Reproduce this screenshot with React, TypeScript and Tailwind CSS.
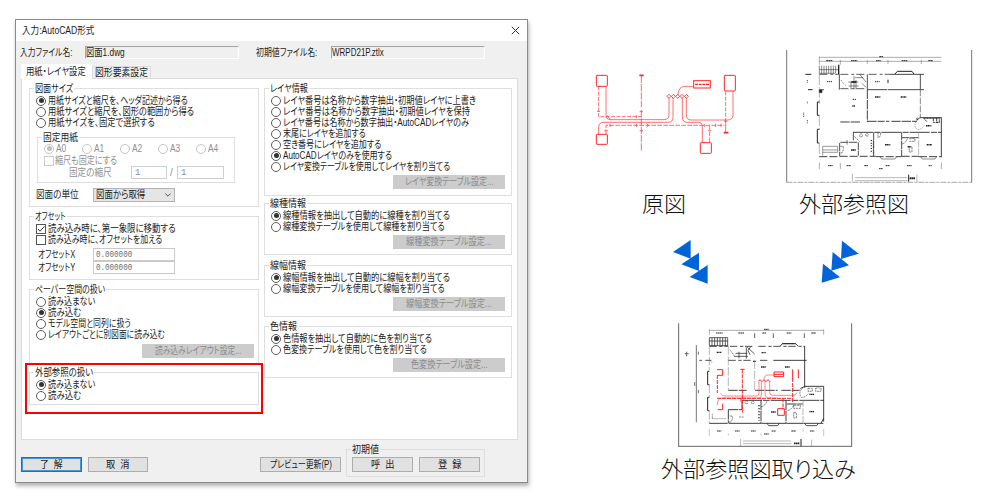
import { useLayoutEffect, useRef, type ReactNode } from 'react'
import { clsx } from 'clsx'

const LAYER_OPTIONS = [
  { label: 'レイヤ番号は名称から数字抽出・初期値レイヤに上書き', width: 'w-[193px]' },
  { label: 'レイヤ番号は名称から数字抽出・初期値レイヤを保持', width: 'w-[187px]' },
  { label: 'レイヤ番号は名称から数字抽出・AutoCADレイヤのみ', width: 'w-[186px]' },
  { label: '末尾にレイヤを追加する', width: 'w-[83px]' },
  { label: '空き番号にレイヤを追加する', width: 'w-[98px]' },
  { label: 'AutoCADレイヤのみを使用する', width: 'w-[109px]', checked: true },
  { label: 'レイヤ変換テーブルを使用してレイヤを割り当てる', width: 'w-[167px]' },
]

const MAPPING_GROUPS = [
  {
    title: '線種情報',
    titleWidth: 'w-[36px]',
    margin: 'mt-[7px]',
    button: '線種変換テーブル設定...',
    buttonWidth: 'w-[86px]',
    options: [
      { label: '線種情報を抽出して自動的に線種を割り当てる', width: 'w-[167px]', checked: true },
      { label: '線種変換テーブルを使用して線種を割り当てる', width: 'w-[162px]' },
    ],
  },
  {
    title: '線幅情報',
    titleWidth: 'w-[36px]',
    margin: 'mt-[10px]',
    button: '線幅変換テーブル設定...',
    buttonWidth: 'w-[86px]',
    options: [
      { label: '線幅情報を抽出して自動的に線幅を割り当てる', width: 'w-[167px]', checked: true },
      { label: '線幅変換テーブルを使用して線幅を割り当てる', width: 'w-[162px]' },
    ],
  },
  {
    title: '色情報',
    titleWidth: 'w-[27px]',
    margin: 'mt-[9px]',
    button: '色変換テーブル設定...',
    buttonWidth: 'w-[77px]',
    options: [
      { label: '色情報を抽出して自動的に色を割り当てる', width: 'w-[149px]', checked: true },
      { label: '色変換テーブルを使用して色を割り当てる', width: 'w-[144px]' },
    ],
  },
]

const PAPER_SIZES = [
  { label: 'A0', checked: true },
  { label: 'A1' },
  { label: 'A2' },
  { label: 'A3' },
  { label: 'A4' },
]

/** Condenses a line of text to the width of its box. */
function Fit({ className, children }: { className: string; children: string }) {
  const ref = useRef<HTMLSpanElement>(null)

  useLayoutEffect(() => {
    const el = ref.current
    if (!el || !el.parentElement) return
    el.style.transform = `scaleX(${el.parentElement.clientWidth / el.offsetWidth})`
  }, [children])

  return (
    <span className={clsx('block shrink-0', className)}>
      <span ref={ref} className="block w-max origin-left whitespace-pre [font-feature-settings:'palt']">
        {children}
      </span>
    </span>
  )
}

function Dot({ checked, disabled }: { checked?: boolean; disabled?: boolean }) {
  return (
    <span
      className={clsx(
        'flex size-[10px] shrink-0 items-center justify-center rounded-full border bg-white',
        disabled ? 'border-[#c4c4c4]' : 'border-[#5c5c5c]',
      )}
    >
      {checked ? <span className={clsx('size-[5px] rounded-full', disabled ? 'bg-[#c0c0c0]' : 'bg-[#333]')} /> : null}
    </span>
  )
}

function Box({ checked, disabled }: { checked?: boolean; disabled?: boolean }) {
  return (
    <span className={clsx('size-[10px] shrink-0 border bg-white', disabled ? 'border-[#ccc]' : 'border-[#555]')}>
      {checked ? (
        <svg viewBox="0 0 8 8" className="block size-2 fill-none stroke-[#333]">
          <path d="M1 4l2 2.2L7.4 1.4" />
        </svg>
      ) : null}
    </span>
  )
}

function Radio({ label, width, checked }: { label: string; width: string; checked?: boolean }) {
  return (
    <div className="flex h-[11px] items-center gap-[2px] pl-[6px]">
      <Dot checked={checked} />
      <Fit className={width}>{label}</Fit>
    </div>
  )
}

function Group({
  title,
  titleWidth,
  className,
  children,
}: {
  title: string
  titleWidth: string
  className?: string
  children: ReactNode
}) {
  return (
    <section className={clsx('border border-[#dedede]', className)}>
      <div className="-mt-[6px] mb-px ml-[4px] flex h-[11px] w-max items-center bg-inherit px-px">
        <Fit className={titleWidth}>{title}</Fit>
      </div>
      {children}
    </section>
  )
}

function DisabledButton({ label, width, className }: { label: string; width: string; className?: string }) {
  return (
    <div
      className={clsx(
        'flex h-[14px] w-[112px] items-center justify-center bg-[#cccccc] text-[#8b8b8b]',
        className,
      )}
    >
      <Fit className={width}>{label}</Fit>
    </div>
  )
}

function Button({ label, width, className }: { label: string; width: string; className?: string }) {
  return (
    <div className={clsx('flex h-[15px] items-center justify-center bg-[#e1e1e1]', className)}>
      <Fit className={width}>{label}</Fit>
    </div>
  )
}

function ImportDialog() {
  return (
    <div className="mt-[19px] ml-[15px] flex h-[464px] w-[513px] shrink-0 flex-col border border-[#8a8a8a] bg-[#f0f0f0] font-['Liberation_Sans','Noto_Sans_CJK_JP',sans-serif] text-[10px] leading-[10px] text-[#1c1c1c] shadow-[1px_3px_4px_rgba(0,0,0,0.3)]">
      <header className="flex h-[21px] items-center justify-between bg-white pr-[7px] pl-[6px]">
        <Fit className="w-[72px]">入力:AutoCAD形式</Fit>
        <svg viewBox="0 0 9 9" className="size-[9px] fill-none stroke-[#333]">
          <path d="M.8.8l7.4 7.4M8.2.8L.8 8.2" />
        </svg>
      </header>

      <div className="flex h-[23px] items-center pl-[4px]">
        <Fit className="w-[52px]">入力ファイル名:</Fit>
        <div className="ml-[13px] flex h-[13px] w-[154px] items-center border border-t-[#a5a5a5] border-r-white border-b-white border-l-[#a5a5a5]">
          <Fit className="w-[39px]">図面1.dwg</Fit>
        </div>
        <Fit className="ml-[17px] w-[61px]">初期値ファイル名:</Fit>
        <div className="ml-[14px] flex h-[13px] w-[154px] items-center border border-t-[#a5a5a5] border-r-white border-b-white border-l-[#a5a5a5]">
          <Fit className="w-[52px]">WRPD21P.ztlx</Fit>
        </div>
      </div>

      <div className="flex h-[14px] items-end pl-[5px]">
        <div className="z-10 -mb-px flex h-[15px] w-[71px] items-center bg-white pl-[5px]">
          <Fit className="w-[60px]">用紙・レイヤ設定</Fit>
        </div>
        <div className="flex h-[12px] w-[59px] items-center border border-b-0 border-[#dcdcdc] pl-[2px]">
          <Fit className="w-[53px]">図形要素設定</Fit>
        </div>
      </div>

      <main className="mr-[9px] ml-[5px] flex h-[362px] border border-[#dcdcdc] bg-white">
        <div className="ml-[7px] w-[230px]">
          <Group title="図面サイズ" titleWidth="w-[38px]" className="mt-[9px] h-[119px] bg-white">
            <Radio label="用紙サイズと縮尺を、ヘッダ記述から得る" width="w-[140px]" checked />
            <Radio label="用紙サイズと縮尺を、図形の範囲から得る" width="w-[146px]" />
            <Radio label="用紙サイズを、固定で選択する" width="w-[107px]" />
            <Group title="固定用紙" titleWidth="w-[35px]" className="mt-[9px] ml-[7px] h-[46px] w-[198px] bg-white">
              <div className="-mt-px flex h-[11px] items-center pl-[6px] text-[#8f8f8f]">
                {PAPER_SIZES.map((size) => (
                  <div key={size.label} className="flex w-[38.5px] items-center gap-[2px]">
                    <Dot checked={size.checked} disabled />
                    <Fit className="w-[10px]">{size.label}</Fit>
                  </div>
                ))}
              </div>
              <div className="mt-px flex h-[11px] items-center gap-[1px] pl-[6px] text-[#8f8f8f]">
                <Box disabled />
                <Fit className="w-[62px]">縮尺も固定にする</Fit>
              </div>
              <div className="flex h-[13px] items-center pl-[31px] text-[#8f8f8f]">
                <Fit className="w-[43px]">固定の縮尺</Fit>
                <div className="ml-[19px] flex h-[13px] w-[36px] items-center border border-[#cfcfcf] pl-[3px] font-['Liberation_Mono'] text-[9px]">
                  1
                </div>
                <span className="ml-[3px] w-[7px]">/</span>
                <div className="flex h-[13px] w-[47px] items-center border border-[#cfcfcf] pl-[3px] font-['Liberation_Mono'] text-[9px]">
                  1
                </div>
              </div>
            </Group>
            <div className="mt-[5px] flex items-center pl-[6px]">
              <Fit className="w-[43px]">図面の単位</Fit>
              <div className="ml-[14px] flex h-[14px] w-[82px] items-center justify-between border border-[#b4b4b4] bg-[#e5e5e5] pr-[3px] pl-[2px]">
                <Fit className="w-[49px]">図面から取得</Fit>
                <svg viewBox="0 0 6 4" className="h-1 w-1.5 fill-none stroke-[#555]">
                  <path d="M.3.5L3 3.2 5.7.5" />
                </svg>
              </div>
            </div>
          </Group>

          <Group title="オフセット" titleWidth="w-[31px]" className="mt-[9px] h-[64px] bg-white">
            <div className="flex h-[11px] items-center gap-[2px] pl-[6px]">
              <Box checked />
              <Fit className="w-[128px]">読み込み時に、第一象限に移動する</Fit>
            </div>
            <div className="flex h-[11px] items-center gap-[2px] pl-[6px]">
              <Box />
              <Fit className="w-[114px]">読み込み時に、オフセットを加える</Fit>
            </div>
            <div className="pt-[3px]">
              {['X', 'Y'].map((axis) => (
                <div key={axis} className="flex h-[13px] items-center pl-[8px]">
                  <Fit className="w-[37px]">{`オフセット${axis}`}</Fit>
                  <div className="ml-[18px] flex h-[13px] w-[82px] items-center border border-[#cacaca] pl-[2px] font-['Liberation_Mono'] text-[9px] text-[#6d6d6d]">
                    <Fit className="w-[36px]">0.000000</Fit>
                  </div>
                </div>
              ))}
            </div>
          </Group>

          <Group title="ペーパー空間の扱い" titleWidth="w-[70px]" className="mt-[9px] h-[75px] bg-white">
            <Radio label="読み込まない" width="w-[47px]" />
            <Radio label="読み込む" width="w-[33px]" checked />
            <Radio label="モデル空間と同列に扱う" width="w-[83px]" />
            <Radio label="レイアウトごとに別図面に読み込む" width="w-[117px]" />
            <DisabledButton label="読み込みレイアウト設定..." width="w-[87px]" className="mt-[4px] ml-[112px]" />
          </Group>

          <div className="-mt-px -ml-[4px] h-[51px] w-[238px] border-2 border-[#ff0000] pl-[2px]">
            <Group title="外部参照の扱い" titleWidth="w-[58px]" className="mt-[7px] h-[33px] w-[230px] bg-white">
              <Radio label="読み込まない" width="w-[47px]" checked />
              <Radio label="読み込む" width="w-[33px]" />
            </Group>
          </div>
        </div>

        <div className="ml-[5px] w-[248px]">
          <Group title="レイヤ情報" titleWidth="w-[38px]" className="mt-[9px] h-[108px] bg-white">
            {LAYER_OPTIONS.map((option) => (
              <Radio key={option.label} {...option} />
            ))}
            <DisabledButton label="レイヤ変換テーブル設定..." width="w-[89px]" className="mt-[3px] ml-[128px]" />
          </Group>
          {MAPPING_GROUPS.map((group) => (
            <Group
              key={group.title}
              title={group.title}
              titleWidth={group.titleWidth}
              className={clsx('h-[52px] bg-white', group.margin)}
            >
              {group.options.map((option) => (
                <Radio key={option.label} {...option} />
              ))}
              <DisabledButton label={group.button} width={group.buttonWidth} className="mt-[3px] ml-[128px]" />
            </Group>
          ))}
        </div>
      </main>

      <footer className="mt-[9px] flex pl-[5px]">
        <Button
          label="了  解"
          width="w-[23px]"
          className="mt-[8px] w-[61px] border border-[#0078d7] ring-1 ring-[#0078d7]/70 ring-inset"
        />
        <Button label="取  消" width="w-[24px]" className="mt-[8px] ml-[6px] w-[60px] border border-[#adadad]" />
        <Button label="プレビュー更新(P)" width="w-[62px]" className="mt-[8px] ml-[112px] w-[81px] border border-[#adadad]" />
        <Group title="初期値" titleWidth="w-[27px]" className="ml-[5px] h-[28px] w-[139px] bg-[#f0f0f0]">
          <div className="mt-[2px] flex gap-[6px] pl-[5px]">
            <Button label="呼  出" width="w-[24px]" className="w-[61px] border border-[#adadad]" />
            <Button label="登  録" width="w-[24px]" className="w-[61px] border border-[#adadad]" />
          </div>
        </Group>
      </footer>
    </div>
  )
}

function WiringDrawing() {
  return (
    <svg viewBox="0 0 510 300" className="block h-[100px] w-[170px] fill-none stroke-[#ff2626] stroke-2">
      <rect x="49" y="46" width="33" height="33" rx="2" strokeWidth="3" />
      <rect x="49" y="223" width="33" height="30" rx="2" strokeWidth="3" />
      <rect x="433" y="46" width="33" height="47" rx="2" strokeWidth="3" />
      <rect x="361" y="248" width="33" height="32" rx="2" strokeWidth="3" />
      <rect x="341" y="62" width="50" height="22" strokeWidth="3" />
      <path d="M345 73h42" strokeWidth="4" strokeDasharray="9 2" />
      <path d="M78 79v87q0 13 14 13h160q15 0 15-15v-50M82 166q2 9 10 11" />
      <path d="M56 222v-20q0-15 15-15h192q16 0 16-15v-58" />
      <path d="M307 114v57q0 16 14 16h34q12 0 12 14v46M319 114v50q0 16 14 16h108q18 0 18-14V94M294 106q0-27 22-27h25" />
      <path d="M56 79v91h128M437 94v90" strokeDasharray="12 4" />
      <path d="M78 222v-26h356M389 246v-50" strokeDasharray="14 4" />
      <path d="M184 47v95M184 150v122" strokeDasharray="22 3" />
      <path d="M178 46h13M431 218h14" strokeWidth="5" />
      <path d="M437 184v34M179 155h10M179 212h10M51 154h9M432 184h11M73 212h10M384 212h10M169 165v10M200 190l5 6-5 6M90 192v9M169 192v9M373 192v9M407 191v10M423 191v10" />
      <path d="M261 109l6-6 6 6-6 6zM274 109l6-6 6 6-6 6zM287 109l6-6 6 6-6 6zM300 109l6-6 6 6-6 6zM313 109l6-6 6 6-6 6z" strokeWidth="2.5" />
    </svg>
  )
}

function FloorPlan() {
  return (
    <svg viewBox="0 0 600 440" className="block h-[146.67px] w-[200px] fill-none stroke-[#222] stroke-[1.6]">
      <path d="M20 30v397M575 30v397" stroke="#777" strokeWidth="3" />
      <path d="M19 427h557" stroke="#aaa" strokeWidth="3" strokeDasharray="18 3 9 3" />
      <path d="M118 52h366M118 64h366M118 50v24M181 60v14M262 60v12M324 60v12M424 60v12" stroke="#666" />
      <path d="M139 62h19M213 62h19M288 62h14M365 62h18M445 62h14M298 50h11" strokeWidth="3" strokeDasharray="5 1" />
      <path d="M118 89h58M118 77v23M125 77v23M132 77v23M139 77v23M146 77v23M153 77v23M160 77v23M167 77v23M118 100h48" />
      <path d="M176 74v28" strokeWidth="4" />
      <path d="M76 103h18M84 149h14" strokeWidth="3" />
      <path d="M118 103h60M118 149h14M181 103h80M266 103h60M181 146h80" strokeDasharray="24 9 9 6" strokeWidth="2.2" />
      <path d="M326 103h106M262 149h60M324 149h108" strokeWidth="2.5" />
      <path d="M178 103v46M262 103v46M421 103v46" strokeWidth="2.4" />
      <path d="M345 102l7-8h44l6 8" strokeWidth="3" />
      <path d="M118 103v88M118 226v42M118 310v42" stroke="#777" strokeDasharray="32 6" />
      <path d="M118 186h-6v40h6M118 268h-6v41h6" strokeWidth="3" />
      <path d="M118 150h8v8h-8z" fill="#222" />
      <path d="M262 149v97M262 244h52M318 244h10M334 244h77M181 246h60" strokeWidth="2.6" strokeDasharray="28 3" />
      <path d="M421 149v84" stroke="#777" strokeWidth="2.6" strokeDasharray="20 4" />
      <path d="M222 108v40M228 120v28M213 148v-22M205 126h30M206 138h30M225 113h24M240 104l18 22M246 130l12 12" />
      <path d="M214 126h15" strokeWidth="5" />
      <path d="M183 120l5 8 6 5 6 5" strokeDasharray="3 3" />
      <path d="M324 119v10" strokeWidth="3" />
      <path d="M285 171h16M362 171h17M438 257h16M315 314h16M440 314h16M213 330h15M383 320h10M217 198h8" strokeWidth="4.5" strokeDasharray="4 1" />
      <path d="M141 125h15M285 125h14M218 178h12" strokeWidth="3" strokeDasharray="4 2" />
      <path d="M484 232v120M411 240l9-7h64M411 240v-7" strokeWidth="2.6" />
      <path d="M430 235h48v12h-18v-10M434 238l8 8M470 236v12h8" strokeWidth="2.6" strokeDasharray="7 2" />
      <path d="M412 240q-14 17 0 29q15-2 21-12" strokeDasharray="3 4" />
      <path d="M219 277h265" strokeWidth="2.6" strokeDasharray="60 4 18 3" />
      <path d="M220 277v26M281 277v72M365 277v72M181 307h53M235 307v40M179 309v40M365 293h50" strokeWidth="2.4" strokeDasharray="24 2" />
      <path d="M416 277v72" stroke="#777" strokeDasharray="20 4" />
      <path d="M118 350h54M179 349h108M287 350h78M365 349h52M417 350h67" strokeWidth="2.6" strokeDasharray="24 6" />
      <path d="M300 350l5 7h40l5-7M422 350l5 7h38l5-7" />
      <path d="M128 319h45v18h-45M128 330h45M128 347v-28" stroke="#444" />
      <path d="M181 319h9v10l-4 10h-7M216 330h10M223 289l16 16M240 290q-3-9 4-9q6 4 2 9zM258 288q-3-7 3-8q7 4 2 8zM280 300v40M294 277v16q8-1 8-15M365 312q13-2 18-18M388 296h17v8h-17M388 320h8v16h-8zM201 300v14" strokeDasharray="7 2" />
      <path d="M274 300v36" strokeWidth="4" strokeDasharray="3 5" />
      <path d="M118 368v19M181 368v19M484 368v19" stroke="#666" />
      <path d="M144 377h14M200 377h13M253 377h12M317 377h13M381 377h14M446 377h9M297 386h12" strokeWidth="3" strokeDasharray="5 1" />
      <path d="M82 120v8M82 185v6M71 218v14M82 240v11" strokeWidth="2.4" strokeDasharray="3 2" />
      <path d="M217 402v23M225 413h157M225 422h157M411 404v22" stroke="#777" />
      <path d="M386 404v21" strokeWidth="3" />
      <path d="M389 415h16" strokeWidth="6" strokeDasharray="5 1" />
    </svg>
  )
}

function MergedPlan() {
  return (
    <svg viewBox="0 0 660 420" className="block h-[140px] w-[220px] fill-none stroke-[#222] stroke-[1.6]">
      <path d="M86 40v369M605 40v369M85 409h521" stroke="#666" strokeWidth="3" />
      <path d="M178 61h343M178 58v16M521 58v16" stroke="#666" />
      <path d="M314 70v14M370 70v14M463 70v14" stroke="#666" strokeWidth="3" />
      <path d="M198 69h20M265 69h18M337 69h12M410 69h14M484 69h14M342 58h14" strokeWidth="3" strokeDasharray="5 1" />
      <path d="M178 83h55v24h-55zM178 93h55M186 83v24M194 83v24M202 83v24M210 83v24M218 83v24M226 83v24" strokeWidth="2.2" />
      <path d="M139 105v232" stroke="#777" strokeWidth="3" />
      <path d="M104 131h12M110 125v14M145 125v9M134 216v12M145 240v10" stroke="#555" strokeWidth="2.6" />
      <path d="M178 109h57M240 109h75M325 109h139M148 151h8M166 151h18M235 151h70M330 151h23" strokeWidth="2.4" strokeDasharray="22 8 10 5" />
      <path d="M370 151h100" strokeWidth="2.6" />
      <path d="M464 108v125" strokeWidth="2.6" />
      <path d="M391 108l6-7h40l7 7M397 101h40" strokeWidth="2.6" />
      <path d="M178 109v72M178 224v38M178 303v38M235 109v131M314 151v90" stroke="#777" strokeDasharray="26 5" />
      <path d="M178 184h-5v40h5M178 262h-5v40h5" strokeWidth="3" />
      <path d="M257 130h35M252 139h42M267 125v20M289 112v34M292 112l22 20M302 110l-8 12 6 12" strokeWidth="2.2" />
      <path d="M240 119l12 18M180 151l6 7" strokeDasharray="4 2" />
      <path d="M200 127h14M335 128h12M333 171h15M405 171h15M478 253h14M363 306h14M478 305h15M309 154h8" strokeWidth="4" strokeDasharray="4 1" />
      <path d="M235 241h55M315 241h68M394 241h55" strokeWidth="2.6" strokeDasharray="28 3" />
      <path d="M451 236l13-7h57v106M521 325l-8 15" strokeWidth="2.6" />
      <path d="M474 235h13v9h-13zM497 234h16v10h-16zM460 233q-18 13-5 30q12-2 20-12" strokeDasharray="6 2" />
      <path d="M276 271h245" strokeWidth="2.6" strokeDasharray="60 3 20 3" />
      <path d="M276 271v28M333 271v69M408 271v69M235 299h42M235 299v41M410 282h48" strokeWidth="2.6" strokeDasharray="30 2" />
      <path d="M459 271v69" stroke="#777" strokeDasharray="20 4" />
      <path d="M178 340h55M237 340h96M334 340h74M409 340h50M460 340h60" strokeWidth="2.6" />
      <path d="M351 340l5 7h27l5-7M464 340l5 7h31l5-7" strokeWidth="2.4" />
      <path d="M187 310v16h41M187 326v-5" stroke="#777" />
      <path d="M286 281q-3-7 4-8q7 4 2 8zM305 281q-3-7 4-8q7 4 2 8zM239 318h8v10l-4 8h-6M267 321h14M333 290q14-3 18-17M413 302q14-4 18-18M431 286h20v9h-20zM431 308h8v16h-8z" strokeDasharray="7 2" />
      <path d="M327 286v46" strokeWidth="5" strokeDasharray="3 6" />
      <path d="M178 357v22M521 357v22M235 370v7M333 370v7M459 355v10" stroke="#999" />
      <path d="M201 363h13M255 363h14M303 363h14M365 363h13M424 363h14M480 363h13M342 372h14" strokeWidth="3" strokeDasharray="5 1" />
      <path d="M272 387v23M279 393h144M279 401h144M485 389v20" stroke="#777" />
      <path d="M453 387v22" strokeWidth="3" />
      <path d="M432 400h16" strokeWidth="5" strokeDasharray="5 1" />
      <g className="stroke-[#ff2020]">
        <path d="M201 179h17v17h-15M218 281v18h-15M372 186h29v14h-29zM428 178v27M445 178v27M383 296h20v20h-20z" strokeWidth="3" />
        <path d="M372 193h29" strokeWidth="3" />
        <path d="M202 195v54M277 178v90M278 270v38M201 265h224M399 265v32M428 204v76" strokeWidth="3" strokeDasharray="12 3" />
        <path d="M213 250q0 8 15 8h91q8 0 8-9v-34M202 285q0-21 14-21h110q8 0 8-9v-40M345 214v34q0 16 13 16h26M359 214v33q0 9 9 9h60q11 0 13-9M342 209q0-14 13-14h17" />
        <path d="M325 214l5-5 6 6 6-6 6 6 6-6 6 6M271 178h13M273 265v10" strokeWidth="3" />
      </g>
    </svg>
  )
}

function FlowArrows() {
  return (
    <svg viewBox="0 0 630 180" className="block h-[60px] w-[210px] fill-[#0064d8]">
      <path d="M39 66L92 30V86zM64 103L117 68V123zM89 141L143 105V161z" />
      <path d="M546 32L596 71 543 87zM518 66L567 106 514 122zM489 101L540 142 485 158z" />
    </svg>
  )
}

export default function App() {
  return (
    <div className="flex h-[500px] w-[1000px] overflow-hidden bg-white font-['Noto_Sans_CJK_JP',sans-serif]">
      <ImportDialog />
      <div className="flex flex-1 flex-col text-[22px] leading-[28px] font-light text-[#111]">
        <div className="flex h-[230px] pt-[40px] pl-[52px]">
          <figure className="w-[170px] pt-[20px]">
            <WiringDrawing />
            <figcaption className="mt-[28px] pl-[62px]">原図</figcaption>
          </figure>
          <figure className="ml-[30px] w-[200px]">
            <FloorPlan />
            <figcaption className="mt-[1px] pl-[19px]">外部参照図</figcaption>
          </figure>
        </div>
        <div className="pl-[132px]">
          <FlowArrows />
        </div>
        <figure className="mt-[20px] pl-[122px]">
          <MergedPlan />
          <figcaption className="mt-[3px] ml-[11px]">
            <Fit className="w-[195px]">外部参照図取り込み</Fit>
          </figcaption>
        </figure>
      </div>
    </div>
  )
}
